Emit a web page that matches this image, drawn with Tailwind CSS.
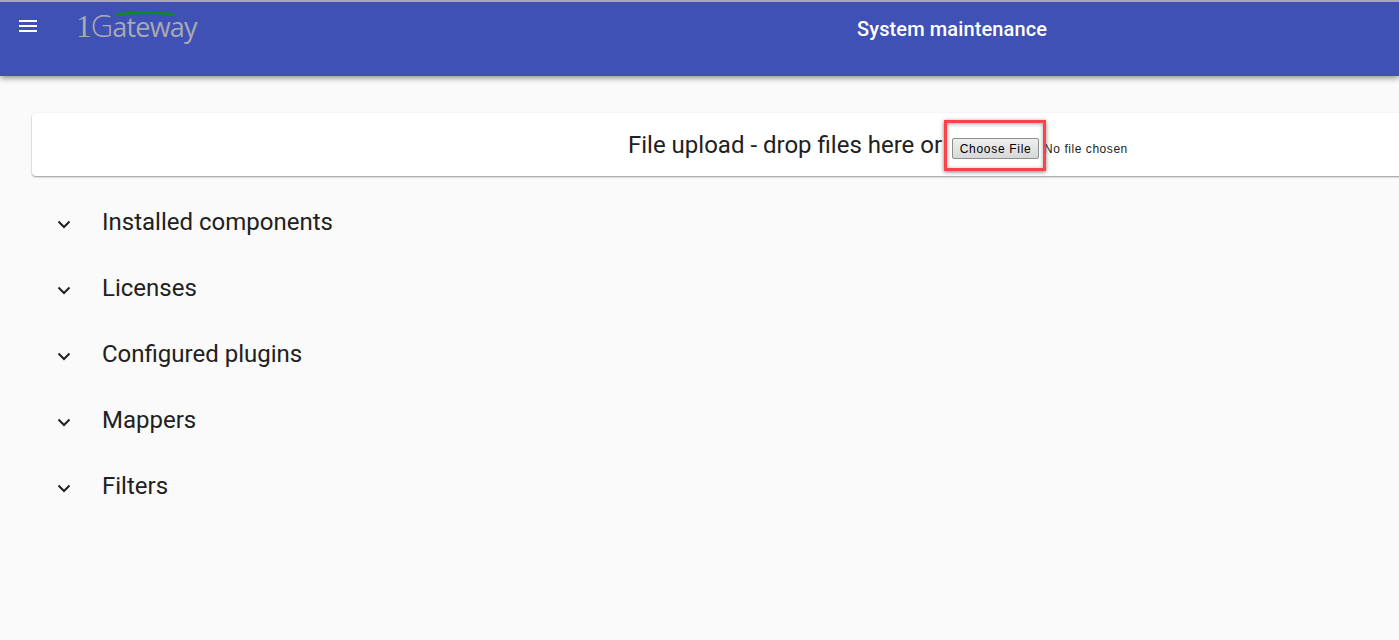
<!DOCTYPE html>
<html lang="en">
<head>
    <meta charset="UTF-8">
    <title>System maintenance</title>
    <script src="https://cdn.jsdelivr.net/npm/@tailwindcss/browser@4"></script>
</head>
<body class="bg-[#fafafa] text-[#212121] font-['Roboto',sans-serif] overflow-hidden">
    <div class="relative h-[640px] w-[1399px] overflow-hidden">
        <header class="relative flex h-[76px] border-t-2 border-[#a9a9ab] bg-[#3f51b5] shadow-[0_2px_6px_rgba(0,0,0,0.45)]">
            <button class="ml-[19px] mt-[18px] h-[13px] w-[18px] shrink-0" aria-label="Menu">
                <svg viewBox="0 0 18 13" class="block h-[13px] w-[18px]" fill="#fff">
                    <rect x="0" y="0" width="18" height="2"/>
                    <rect x="0" y="5" width="18" height="2"/>
                    <rect x="0" y="10" width="18" height="2"/>
                </svg>
            </button>
            <div class="relative ml-[41px] mt-[8px] h-[36px] w-[122px] shrink-0 font-['Open_Sans',sans-serif] text-[#a9a9af]">
                <svg viewBox="0 0 60 6" class="absolute left-[37px] top-[1px] h-[6px] w-[60px]" fill="none">
                    <path d="M0.5 4 C18 0.8 42 0.8 59.5 4" stroke="#0f8a1e" stroke-width="2.6"/>
                </svg>
                <span class="absolute left-[-2px] top-[-3px] text-[27px] leading-[36px] tracking-[-0.8px]"><span class="text-[31px] font-['Liberation_Serif',serif]">1</span><span class="text-[31px] font-light">G</span>ateway</span>
            </div>
            <h1 class="absolute left-[857px] top-[15px] text-xl leading-6 font-medium tracking-[0.12px] text-white">System maintenance</h1>
        </header>

        <main>
            <section class="ml-8 mt-[37px] flex h-[63px] w-[1500px] items-center rounded-[4px] bg-white pl-[596px] shadow-[0_1px_2px_rgba(0,0,0,0.4)]">
                <span class="text-2xl leading-8">File upload - drop files here or</span>
                <button class="ml-[10px] mt-[8px] h-[21px] w-[87px] rounded-[2px] border border-[#8f8f8f] bg-gradient-to-b from-[#f0f0f0] to-[#d8d8d8] font-['Liberation_Sans',sans-serif] text-xs tracking-[0.7px] text-black">Choose File</button>
                <span class="ml-[5px] mt-[8px] font-['Liberation_Sans',sans-serif] text-xs tracking-[0.55px] text-[#222]">No file chosen</span>
            </section>

            <div class="ml-[57px] mt-[13px]">
                <div class="flex h-[66px] items-center">
                    <svg viewBox="0 0 14 9" class="mt-[4px] h-[9px] w-[14px]" fill="none" stroke="#212121" stroke-width="2"><path d="M1.5 1.5 7 7l5.5-5.5"/></svg>
                    <h2 class="ml-[31px] text-2xl">Installed components</h2>
                </div>
                <div class="flex h-[66px] items-center">
                    <svg viewBox="0 0 14 9" class="mt-[4px] h-[9px] w-[14px]" fill="none" stroke="#212121" stroke-width="2"><path d="M1.5 1.5 7 7l5.5-5.5"/></svg>
                    <h2 class="ml-[31px] text-2xl">Licenses</h2>
                </div>
                <div class="flex h-[66px] items-center">
                    <svg viewBox="0 0 14 9" class="mt-[4px] h-[9px] w-[14px]" fill="none" stroke="#212121" stroke-width="2"><path d="M1.5 1.5 7 7l5.5-5.5"/></svg>
                    <h2 class="ml-[31px] text-2xl">Configured plugins</h2>
                </div>
                <div class="flex h-[66px] items-center">
                    <svg viewBox="0 0 14 9" class="mt-[4px] h-[9px] w-[14px]" fill="none" stroke="#212121" stroke-width="2"><path d="M1.5 1.5 7 7l5.5-5.5"/></svg>
                    <h2 class="ml-[31px] text-2xl">Mappers</h2>
                </div>
                <div class="flex h-[66px] items-center">
                    <svg viewBox="0 0 14 9" class="mt-[4px] h-[9px] w-[14px]" fill="none" stroke="#212121" stroke-width="2"><path d="M1.5 1.5 7 7l5.5-5.5"/></svg>
                    <h2 class="ml-[31px] text-2xl">Filters</h2>
                </div>
            </div>
        </main>

        <!-- red callout sits over the upload card -->
        <div class="absolute left-[944px] top-[120px] h-[51px] w-[102px] border-[3px] border-[#fb4248] shadow-[0_1px_4px_rgba(0,0,0,0.5),inset_0_1px_4px_rgba(0,0,0,0.35)]"></div>
    </div>
</body>
</html>
